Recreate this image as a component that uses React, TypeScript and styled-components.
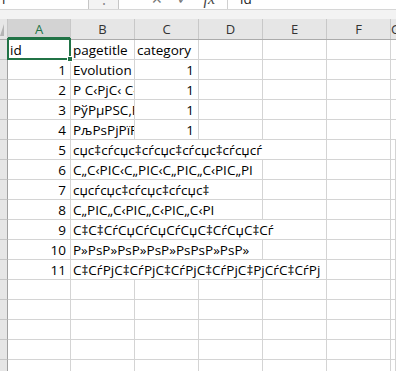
import styled, { createGlobalStyle } from 'styled-components';

const GlobalStyle = createGlobalStyle`
  html, body {
    margin: 0;
    padding: 0;
    background: #fff;
  }
  body {
    font-family: 'Open Sans', Lato, 'Liberation Sans', sans-serif;
  }
`;

const GRID = '#d4d4d4';
const GREEN = '#217346';

type Row = {
  id: string;
  title: string;
  cat?: string;
  span?: number;
  head?: boolean;
};

const rows: Row[] = [
  { id: 'id', title: 'pagetitle', cat: 'category', head: true },
  { id: '1', title: 'Evolution', cat: '1' },
  { id: '2', title: 'Р С‹РјС‹ С‹РјС‹', cat: '1' },
  { id: '3', title: 'РўРµРЅС‚РѕРІ', cat: '1' },
  { id: '4', title: 'РљРѕРјРїР°РЅРёСЏ', cat: '1' },
  { id: '5', title: 'сџс‡сѓсџс‡сѓсџс‡сѓсџс‡сѓсџсѓ', span: 4 },
  { id: '6', title: 'С„С‹РІС‹С„РІС‹С„РІС„С‹РІС„РІ', span: 3 },
  { id: '7', title: 'сџсѓсџс‡сѓсџс‡сѓсџс‡', span: 3 },
  { id: '8', title: 'С„РІС„С‹РІС„С‹РІС„С‹РІ', span: 3 },
  { id: '9', title: 'С‡С‡СѓСџСѓСџСѓСџС‡СѓСџС‡Сѓ', span: 4 },
  { id: '10', title: 'Р»РѕР»РѕР»РѕР»РѕРѕР»РѕР»', span: 3 },
  { id: '11', title: 'С‡СѓРјС‡СѓРјС‡СѓРјС‡СѓРјС‡РјСѓС‡СѓРј', span: 4 },
];

const columns = ['A', 'B', 'C', 'D', 'E', 'F', 'G'];
const colWidth = (i: number) => (i === 0 ? 63 : 64);

export default function App() {
  const empty = Array.from({ length: 5 });

  return (
    <>
      <GlobalStyle />
      <Sheet>
        <FormulaBar>
          <NameBox>
            <Peek $shift={-9}>A1</Peek>
          </NameBox>
          <Grip>
            <Peek>⋮</Peek>
          </Grip>
          <FxArea>
            <Peek>✕</Peek>
            <Peek>✓</Peek>
            <FxLabel>fx</FxLabel>
          </FxArea>
          <Formula>
            <Peek>id</Peek>
          </Formula>
        </FormulaBar>

        <Band />

        <HeaderRow>
          <Corner />
          {columns.map((c, i) => (
            <ColHead key={c} $w={colWidth(i)} $active={i === 0} $last={i === columns.length - 1}>
              {c}
            </ColHead>
          ))}
        </HeaderRow>

        {rows.map((r, idx) => {
          const bWidth = r.cat !== undefined ? 1 : r.span ?? 1;
          const rest = columns.length - 2 - (r.cat !== undefined ? 1 : bWidth);
          return (
            <DataRow key={idx}>
              <RowHead />
              <Cell $w={63} $selected={idx === 0}>
                <Text $align={r.head ? 'left' : 'right'}>{r.id}</Text>
              </Cell>
              <Cell $w={64 * bWidth}>
                <Text $align="left">{r.title}</Text>
              </Cell>
              {r.cat !== undefined && (
                <Cell $w={64}>
                  <Text $align={r.head ? 'left' : 'right'}>{r.cat}</Text>
                </Cell>
              )}
              {Array.from({ length: rest }).map((_, k) => (
                <Cell key={k} $w={64} />
              ))}
              <Cell $fill />
            </DataRow>
          );
        })}

        {empty.map((_, idx) => (
          <DataRow key={'e' + idx}>
            <RowHead />
            {columns.map((c, i) =>
              i === columns.length - 1 ? <Cell key={c} $fill /> : <Cell key={c} $w={colWidth(i)} />
            )}
          </DataRow>
        ))}
      </Sheet>
    </>
  );
}

const Sheet = styled.div`
  width: 396px;
  height: 371px;
  overflow: hidden;
  display: flex;
  flex-direction: column;
  background: #fff;
`;

const FormulaBar = styled.div`
  display: flex;
  flex-shrink: 0;
  height: 9px;
  border-bottom: 1px solid #d6d6d6;
  overflow: hidden;
  font-size: 13.5px;
  color: #222;
`;

const Peek = styled.span<{ $shift?: number }>`
  display: block;
  line-height: 14px;
  margin-bottom: 3px;
  margin-left: ${(p) => p.$shift ?? 0}px;
  white-space: nowrap;
`;

const NameBox = styled.div`
  width: 88px;
  display: flex;
  align-items: flex-end;
  overflow: hidden;
  border-right: 1px solid #c6c6c6;
`;

const Grip = styled.div`
  width: 29px;
  display: flex;
  align-items: flex-end;
  justify-content: center;
  overflow: hidden;
  background: #f3f3f3;
  border-right: 1px solid #c6c6c6;
  color: #888;
`;

const FxArea = styled.div`
  width: 109px;
  display: flex;
  align-items: flex-end;
  justify-content: flex-end;
  gap: 14px;
  padding-right: 12px;
  box-sizing: border-box;
  overflow: hidden;
  border-right: 1px solid #d0d0d0;
  color: #777;
`;

const FxLabel = styled(Peek)`
  font-family: 'Liberation Serif', serif;
  font-style: italic;
  font-size: 16px;
  color: #444;
`;

const Formula = styled.div`
  flex: 1;
  display: flex;
  align-items: flex-end;
  padding-left: 12px;
  overflow: hidden;
`;

const Band = styled.div`
  flex-shrink: 0;
  height: 9px;
  background: #f3f3f3;
`;

const HeaderRow = styled.div`
  display: flex;
  flex-shrink: 0;
  height: 21px;
  background: #e6e6e6;
  border-bottom: 1px solid #ababab;
  box-sizing: border-box;
`;

const Corner = styled.div`
  position: relative;
  width: 8px;
  flex-shrink: 0;
  border-right: 1px solid #c6c6c6;
  box-sizing: border-box;
  background: #e6e6e6;

  &::after {
    content: '';
    position: absolute;
    left: 0;
    bottom: 3px;
    width: 0;
    height: 0;
    border-left: 4px solid transparent;
    border-bottom: 12px solid #b4b4b4;
  }
`;

const ColHead = styled.div<{ $w: number; $active?: boolean; $last?: boolean }>`
  ${(p) => (p.$last ? 'flex: 1;' : `width: ${p.$w}px; flex-shrink: 0;`)}
  box-sizing: border-box;
  border-right: 1px solid #c8c8c8;
  text-align: center;
  font-size: 13px;
  line-height: 20px;
  color: ${(p) => (p.$active ? GREEN : '#333')};
  background: ${(p) => (p.$active ? '#d3d3d3' : 'transparent')};
  box-shadow: ${(p) => (p.$active ? `inset 0 -2px 0 ${GREEN}` : 'none')};
`;

const DataRow = styled.div`
  display: flex;
  flex-shrink: 0;
  height: 20px;
`;

const RowHead = styled.div`
  width: 8px;
  flex-shrink: 0;
  box-sizing: border-box;
  background: #e6e6e6;
  border-right: 1px solid #a0a0a0;
  border-bottom: 1px solid #c6c6c6;
`;

const Cell = styled.div<{ $w?: number; $fill?: boolean; $selected?: boolean }>`
  position: relative;
  ${(p) => (p.$fill ? 'flex: 1;' : `width: ${p.$w}px; flex-shrink: 0;`)}
  box-sizing: border-box;
  display: flex;
  border-right: 1px solid ${GRID};
  border-bottom: 1px solid ${GRID};

  ${(p) =>
    p.$selected &&
    `
    &::after {
      content: '';
      position: absolute;
      left: -1px;
      top: -2px;
      right: -1px;
      bottom: -1px;
      border: 2px solid ${GREEN};
      z-index: 2;
    }
    &::before {
      content: '';
      position: absolute;
      right: -3px;
      bottom: -3px;
      width: 4px;
      height: 4px;
      background: ${GREEN};
      border: 1px solid #fff;
      z-index: 3;
    }
  `}
`;

const Text = styled.span<{ $align: 'left' | 'right' }>`
  flex: 1;
  min-width: 0;
  overflow: hidden;
  white-space: nowrap;
  font-size: 13.5px;
  line-height: 21px;
  height: 19px;
  color: #000;
  text-align: ${(p) => p.$align};
  padding: 0 ${(p) => (p.$align === 'right' ? '4px' : '0')} 0 ${(p) => (p.$align === 'left' ? '2px' : '0')};
`;
